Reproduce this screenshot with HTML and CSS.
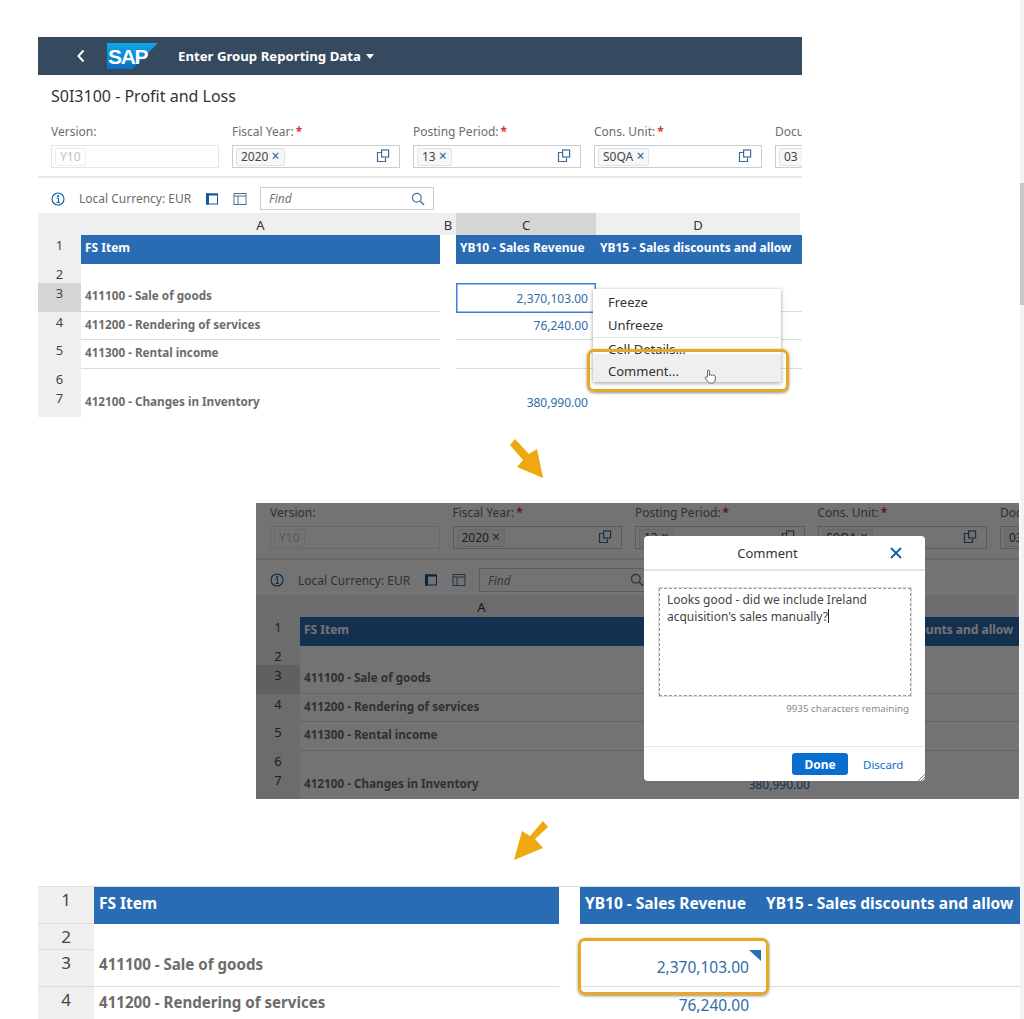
FILE: index.html
```html
<!DOCTYPE html>
<html lang="en">
<head>
  <meta charset="UTF-8" />
  <meta name="viewport" content="width=device-width, initial-scale=1.0"/>
  <title>Enter Group Reporting Data - Comment</title>
  <link rel="stylesheet" href="styles.css">
</head>
<body>
  <!-- shared icons -->
  <svg class="defs" width="0" height="0">
    <symbol id="i-help" viewBox="0 0 14 14">
      <path d="M5 3.5H1.5V12.5H9.5V9" fill="none" stroke="currentColor" stroke-width="1.2"/>
      <rect x="5.6" y="1" width="7" height="7" fill="none" stroke="currentColor" stroke-width="1.2"/>
    </symbol>
    <symbol id="i-info" viewBox="0 0 14 14">
      <circle cx="7" cy="7" r="6" fill="none" stroke="currentColor" stroke-width="1.1"/>
      <path d="M5.6 6H7.5V10.3M5.4 10.4H9M6.6 3.4H7.7V4.5H6.6Z" fill="none" stroke="currentColor" stroke-width="1"/>
    </symbol>
    <symbol id="i-left" viewBox="0 0 14 13">
      <rect x="1.5" y="1.5" width="11" height="10" fill="none" stroke="currentColor" stroke-width="1"/>
      <rect x="1" y="1" width="3" height="11" fill="currentColor"/>
      <rect x="1" y="1" width="12" height="2" fill="currentColor"/>
    </symbol>
    <symbol id="i-top" viewBox="0 0 14 13">
      <rect x="1" y="1" width="12" height="11" fill="none" stroke="currentColor" stroke-width="1"/>
      <path d="M1 3.5H13M5 3.5V12" fill="none" stroke="currentColor" stroke-width="1"/>
    </symbol>
    <symbol id="i-find" viewBox="0 0 14 14">
      <circle cx="5.8" cy="5.8" r="4.4" fill="none" stroke="currentColor" stroke-width="1.2"/>
      <path d="M9 9L13 13" fill="none" stroke="currentColor" stroke-width="1.4"/>
    </symbol>
  </svg>

  <div class="page">

    <!-- step 1: context menu on the cell -->
    <section class="panel panel-top">
      <header class="shell">
        <svg class="back" width="10" height="14" viewBox="0 0 10 14"><path d="M7.5 1.5L2.5 7L7.5 12.5" fill="none" stroke="#fff" stroke-width="2"/></svg>
        <div class="logo"><span>SAP</span></div>
        <div class="shell-title">Enter Group Reporting Data <span class="caret-down"></span></div>
      </header>
      <h1 class="page-title">S0I3100 - Profit and Loss</h1>
      <div class="filters">
        <div class="field"><div class="label">Version:</div><div class="input off"><span class="token">Y10</span></div></div>
        <div class="field"><div class="label">Fiscal Year:<b>*</b></div><div class="input"><span class="token">2020 <i>×</i></span><svg class="help"><use href="#i-help"/></svg></div></div>
        <div class="field"><div class="label">Posting Period:<b>*</b></div><div class="input"><span class="token">13 <i>×</i></span><svg class="help"><use href="#i-help"/></svg></div></div>
        <div class="field"><div class="label">Cons. Unit:<b>*</b></div><div class="input"><span class="token">S0QA <i>×</i></span><svg class="help"><use href="#i-help"/></svg></div></div>
        <div class="field"><div class="label">Document</div><div class="input"><span class="token">03 <i>×</i></span></div></div>
      </div>
      <div class="toolbar">
        <svg class="tool info"><use href="#i-info"/></svg>
        <span class="currency">Local Currency: EUR</span>
        <svg class="tool dark"><use href="#i-left"/></svg>
        <svg class="tool"><use href="#i-top"/></svg>
        <div class="find"><em>Find</em><svg class="tool"><use href="#i-find"/></svg></div>
      </div>
      <div class="sheet">
        <div class="ch"></div><div class="ch">A</div><div class="ch">B</div><div class="ch sel">C</div><div class="ch last">D</div>
        <div class="rn">1</div><div class="hd">FS Item</div><div></div><div class="hd">YB10 - Sales Revenue</div><div class="hd">YB15 - Sales discounts and allow</div>
        <div class="rn">2</div><div></div><div></div><div></div><div></div>
        <div class="rn sel">3</div><div class="item line">411100 - Sale of goods</div><div></div><div class="val line active">2,370,103.00</div><div class="line"></div>
        <div class="rn">4</div><div class="item line">411200 - Rendering of services</div><div></div><div class="val line">76,240.00</div><div class="line"></div>
        <div class="rn">5</div><div class="item line">411300 - Rental income</div><div></div><div class="line"></div><div class="line"></div>
        <div class="rn">6</div><div></div><div></div><div></div><div></div>
        <div class="rn">7</div><div class="item">412100 - Changes in Inventory</div><div></div><div class="val">380,990.00</div><div></div>
      </div>

      <div class="menu">
        <div class="menu-item">Freeze</div>
        <div class="menu-item">Unfreeze</div>
        <div class="menu-item cut">Cell Details...</div>
        <div class="menu-item hover">Comment...
          <svg class="hand" width="12" height="15" viewBox="0 0 12 15"><path d="M3.5 8V2a1 1 0 0 1 2 0V6.5c0-1.2 2-1.2 2 0 0-1 2-1 2 .3 .2-.7 1.8-.5 1.8 .7V10c0 2.5-1.2 4.2-3.4 4.2H6.500C5 14.200 4.300 13.500 3.500 12L1.300 9.300C.7 8.300 2 7.300 3 8.200Z" fill="#fff" stroke="#555" stroke-width=".9"/></svg>
        </div>
      </div>
      <div class="mark mark-menu"></div>
    </section>

    <svg class="arrow arrow-one" width="38" height="44" viewBox="0 0 38 44"><polygon points="7,2 21,17 29,12 35,41 9,30 15,23 2,8" fill="#efa80f"/></svg>

    <!-- step 2: comment dialog -->
    <section class="panel panel-mid">
      <div class="filters">
        <div class="field"><div class="label">Version:</div><div class="input off"><span class="token">Y10</span></div></div>
        <div class="field"><div class="label">Fiscal Year:<b>*</b></div><div class="input"><span class="token">2020 <i>×</i></span><svg class="help"><use href="#i-help"/></svg></div></div>
        <div class="field"><div class="label">Posting Period:<b>*</b></div><div class="input"><span class="token">13 <i>×</i></span><svg class="help"><use href="#i-help"/></svg></div></div>
        <div class="field"><div class="label">Cons. Unit:<b>*</b></div><div class="input"><span class="token">S0QA <i>×</i></span><svg class="help"><use href="#i-help"/></svg></div></div>
        <div class="field"><div class="label">Document</div><div class="input"><span class="token">03 <i>×</i></span></div></div>
      </div>
      <div class="toolbar">
        <svg class="tool info"><use href="#i-info"/></svg>
        <span class="currency">Local Currency: EUR</span>
        <svg class="tool dark"><use href="#i-left"/></svg>
        <svg class="tool"><use href="#i-top"/></svg>
        <div class="find"><em>Find</em><svg class="tool"><use href="#i-find"/></svg></div>
      </div>
      <div class="sheet">
        <div class="ch"></div><div class="ch">A</div><div class="ch">B</div><div class="ch">C</div><div class="ch last">D</div>
        <div class="rn">1</div><div class="hd">FS Item</div><div></div><div class="hd">YB10 - Sales Revenue</div><div class="hd">YB15 - Sales discounts and allow</div>
        <div class="rn">2</div><div></div><div></div><div></div><div></div>
        <div class="rn sel">3</div><div class="item line">411100 - Sale of goods</div><div></div><div class="val line">2,370,103.00</div><div class="line"></div>
        <div class="rn">4</div><div class="item line">411200 - Rendering of services</div><div></div><div class="val line">76,240.00</div><div class="line"></div>
        <div class="rn">5</div><div class="item line">411300 - Rental income</div><div></div><div class="line"></div><div class="line"></div>
        <div class="rn">6</div><div></div><div></div><div></div><div></div>
        <div class="rn">7</div><div class="item">412100 - Changes in Inventory</div><div></div><div class="val">380,990.00</div><div></div>
      </div>
      <div class="dim"></div>

      <div class="dialog">
        <div class="dialog-head">
          <span class="dialog-title">Comment</span>
          <svg class="dialog-close" width="12" height="12" viewBox="0 0 12 12"><path d="M1 1L11 11M11 1L1 11" stroke="#0a5fb0" stroke-width="1.8"/></svg>
        </div>
        <div class="dialog-body">
          <div class="comment-box">Looks good - did we include Ireland acquisition's sales manually?<span class="text-caret"></span></div>
          <div class="remaining">9935 characters remaining</div>
        </div>
        <div class="dialog-foot">
          <button class="done">Done</button>
          <span class="discard">Discard</span>
        </div>
        <svg class="grip" width="9" height="9" viewBox="0 0 9 9"><path d="M1 8L8 1M4 8L8 4M6.500 8L8 6.500" stroke="#6c8296" stroke-width="1"/></svg>
      </div>
    </section>

    <svg class="arrow arrow-two" width="38" height="42" viewBox="0 0 38 42"><polygon points="30,1 35,7 22,19 30,28 1,40 9,11 17,16" fill="#efa80f"/></svg>

    <!-- step 3: result in the sheet -->
    <section class="panel panel-end">
      <div class="sheet">
        <div class="rn">1</div><div class="hd">FS Item</div><div></div><div class="hd">YB10 - Sales Revenue</div><div class="hd">YB15 - Sales discounts and allow</div>
        <div class="rn">2</div><div></div><div></div><div></div><div></div>
        <div class="rn">3</div><div class="item line">411100 - Sale of goods</div><div></div><div class="val line noted">2,370,103.00</div><div class="line"></div>
        <div class="rn">4</div><div class="item">411200 - Rendering of services</div><div></div><div class="val">76,240.00</div><div></div>
      </div>
      <div class="mark mark-cell"></div>
    </section>
  </div>

  <div class="scrollbar"><div class="scroll-thumb"></div></div>
</body>
</html>
```
FILE: styles.css
```css
* { box-sizing: border-box; }
html, body { margin: 0; height: 1019px; overflow: hidden; background: #fff; }
body { font-family: "Noto Sans", Arial, sans-serif; color: #333; font-size: 12px; position: relative; }
.defs { position: absolute; }
.page { padding-top: 37px; }

.panel { position: relative; overflow: hidden; background: #fff; }
.panel-top { margin-left: 38px; width: 764px; height: 380px; }
.panel-mid { margin-left: 256px; width: 763px; height: 296px; padding-top: 2px; }
.panel-end { margin-left: 38px; width: 982px; height: 133px; }

.arrow { display: block; }
.arrow-one { margin: 20px 0 22px 508px; }
.arrow-two { margin: 21px 0 24px 513px; }

/* Shell bar */
.shell {
  height: 38px;
  background: #354a5f;
  display: flex;
  align-items: center;
  color: #fff;
  padding-left: 38px;
}
.back { margin-right: 21px; }
.logo {
  position: relative;
  width: 51px;
  height: 26px;
  margin-right: 20px;
}
.logo::before {
  content: "";
  position: absolute;
  inset: 0;
  background: linear-gradient(180deg, #10a5e8, #0a6fc4);
  clip-path: polygon(0 0, 100% 0, 50% 100%, 0 100%);
}
.logo span {
  position: relative;
  display: block;
  font: bold 21px/27px "Liberation Sans", Arial, sans-serif;
  letter-spacing: -1.3px;
  padding-left: 1px;
}
.shell-title { font-size: 13.200px; font-weight: 700; }
.caret-down {
  display: inline-block;
  width: 0;
  height: 0;
  margin: 0 0 2px 2px;
  border: 4.500px solid transparent;
  border-top: 5px solid #fff;
  border-bottom: 0;
}
.page-title { margin: 0; padding: 10px 0 0 13px; font-size: 16px; line-height: 22px; font-weight: 400; }

/* Filter bar */
.filters {
  display: grid;
  grid-template-columns: repeat(5, 168px);
  column-gap: 13px;
  padding: 17px 0 8px 13px;
  border-bottom: 2px solid #e8e8e8;
}
.panel-mid .filters { grid-template-columns: repeat(5, 169.500px); padding: 0 0 9px 14px; }
.label { height: 16px; line-height: 16px; margin-bottom: 5px; color: #6a6d70; white-space: nowrap; overflow: hidden; }
.label b { color: #d9363a; margin-left: 2px; }
.input {
  position: relative;
  height: 23px;
  border: 1px solid #c9cdd0;
  padding: 2px 3px;
  display: flex;
  align-items: center;
}
.token {
  height: 18px;
  line-height: 16px;
  padding: 0 4px;
  border: 1px solid #e3e3e3;
  background: #f7f7f7;
  border-radius: 2px;
  white-space: nowrap;
  color: #444;
}
.token i { font-style: normal; font-size: 14px; color: #2a6196; line-height: 14px; }
.input.off { border-color: #e6e6e6; }
.input.off .token { color: #c2c2c2; border-color: #eee; background: #fff; }
.help { position: absolute; right: 9px; top: 3px; width: 14px; height: 14px; color: #3f6b96; }

/* Toolbar */
.toolbar { display: flex; align-items: center; height: 23px; margin: 9px 0 3px; padding-left: 13px; }
.panel-mid .toolbar { height: 24px; margin: 8px 0 3px; padding-left: 14px; }
.tool { width: 14px; height: 14px; flex: none; color: #4d7196; }
.tool.info { color: #0a5fa8; margin-right: 14px; }
.tool.dark { color: #0d5a9e; margin-right: 14px; }
.currency { width: 126px; color: #6a6d70; white-space: nowrap; }
.find {
  width: 174px;
  height: 100%;
  margin-left: 13px;
  border: 1px solid #c9cdd0;
  padding: 0 8px;
  display: flex;
  align-items: center;
  justify-content: space-between;
  color: #777;
}

/* Sheet */
.sheet {
  display: grid;
  grid-template-columns: 43px 359px 16px 140px 206px;
  grid-template-rows: 22px 29px 19px 29px 28px 29px 19px 29px;
}
.panel-mid .sheet { grid-template-columns: 44px 363px 16px 139px 201px; }
.ch { background: #efefef; color: #333; font-size: 13px; line-height: 24px; text-align: center; }
.ch.sel { background: #d5d5d5; }
.ch.last { border-right: 2px solid #fff; }
.rn { background: #efefef; color: #444; font-size: 13px; line-height: 20px; text-align: center; }
.rn.sel { background: #d5d5d5; }
.hd {
  background: #2a6cb3;
  color: #fff;
  font-weight: 700;
  padding: 0 4px 4px;
  display: flex;
  align-items: center;
  white-space: nowrap;
  overflow: hidden;
}
.item { color: #6c6c6c; font-weight: 700; font-size: 11.700px; padding: 0 4px 4px; display: flex; align-items: center; white-space: nowrap; }
.val { color: #2e6ea8; padding-right: 8px; display: flex; align-items: center; justify-content: flex-end; }
.line { border-bottom: 1px solid #dcdcdc; }
.val.active { box-shadow: inset 0 0 0 1.500px #3e7fdc; margin-bottom: -1px; border: 0; }

.panel-end .sheet {
  grid-template-columns: 56px 465px 21px 181px 259px;
  grid-template-rows: 37px 26px 37px 37px;
  border-top: 1px solid #ddd;
  font-size: 15px;
}
.panel-end .rn { font-size: 17px; line-height: 25px; border-bottom: 1px solid #ddd; }
.panel-end .hd { font-size: 15.500px; padding: 0 5px 6px; }
.panel-end .item { font-size: 15.100px; padding: 0 5px 8px; }
.panel-end .val { font-size: 15.500px; padding: 0 12px 2px 0; position: relative; }
.noted::after {
  content: "";
  position: absolute;
  top: 0;
  right: 0;
  width: 12px;
  height: 11px;
  background: #2a6cb3;
  clip-path: polygon(0 0, 100% 0, 100% 100%);
}

/* Context menu */
.menu {
  position: absolute;
  left: 555px;
  top: 252px;
  width: 188px;
  height: 93px;
  background: #fff;
  box-shadow: 0 1px 4px rgba(0,0,0,0.4);
  font-size: 13px;
  padding-top: 2px;
}
.menu-item { height: 23px; line-height: 23px; padding-left: 15px; position: relative; }
.menu-item.cut { height: 17px; line-height: 23px; border-top: 1px solid #e5e5e5; overflow: hidden; }
.menu-item.hover { height: 28px; line-height: 34px; background: #efefef; }
.hand { position: absolute; left: 111px; top: 15px; }

.mark {
  position: absolute;
  border: 3.500px solid #e8a726;
  border-radius: 7px;
  box-shadow: 0 1px 3px rgba(0,0,0,0.45);
}
.mark-menu { left: 549px; top: 312px; width: 202px; height: 43px; }
.mark-cell { left: 540px; top: 52px; width: 191px; height: 57px; }

/* Dialog */
.dim { position: absolute; inset: 0; background: rgba(0,0,0,0.55); }
.dialog {
  position: absolute;
  left: 388px;
  top: 33px;
  width: 281px;
  height: 245px;
  background: #fff;
  border-radius: 4px;
  display: flex;
  flex-direction: column;
}
.dialog-head {
  height: 35px;
  border-bottom: 2px solid #e5e5e5;
  display: flex;
  align-items: center;
  flex: none;
}
.dialog-title { flex: 1; text-align: center; font-size: 13px; padding-left: 12px; }
.dialog-close { width: 12px; margin: 0 23px 0 11px; }
.dialog-body { flex: 1; padding: 17px 14px 0 15px; }
.comment-box {
  height: 108px;
  border: 1px dashed #999;
  outline: 1px solid #ddd;
  padding: 3px 7px;
  line-height: 16.500px;
  font-size: 12px;
  color: #444;
}
.text-caret { display: inline-block; width: 1px; height: 14px; background: #222; vertical-align: -2px; }
.remaining { text-align: right; color: #888; font-size: 9.800px; line-height: 14px; margin: 6px 2px 0 0; }
.dialog-foot {
  height: 35px;
  border-top: 1px solid #e8e8e8;
  display: flex;
  align-items: center;
  padding-left: 148px;
  flex: none;
}
.done {
  width: 56px;
  height: 22px;
  background: #0a6ed1;
  color: #fff;
  border: none;
  border-radius: 3px;
  font: 700 12px "Noto Sans", Arial, sans-serif;
  padding: 0;
}
.discard { color: #0a6ed1; margin-left: 15px; font-size: 11.500px; }
.grip { position: absolute; right: -1px; bottom: -1px; }

/* Window scrollbar */
.scrollbar { position: absolute; right: 0; top: 0; width: 4px; height: 100%; background: #f3f3f3; }
.scroll-thumb { margin-top: 183px; height: 122px; background: #c8c8c8; }
```
